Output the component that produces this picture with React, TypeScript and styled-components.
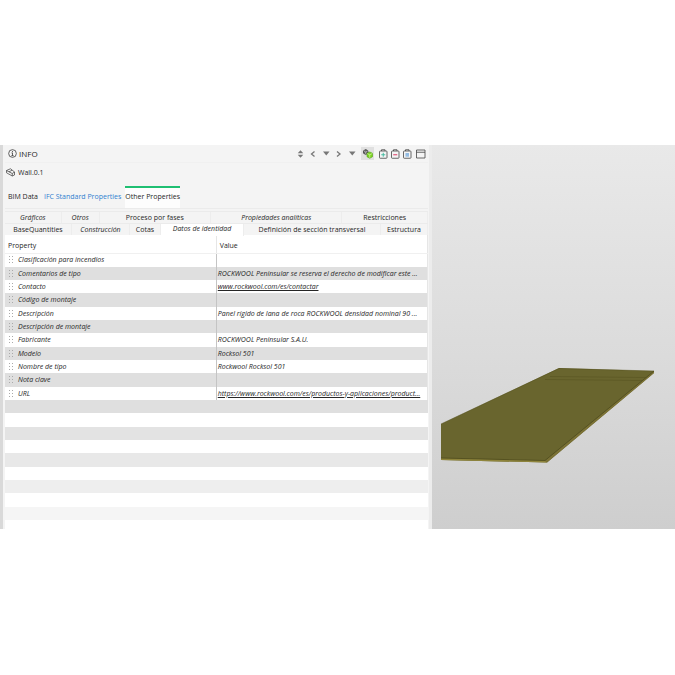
import React from 'react';
import styled, { createGlobalStyle, css } from 'styled-components';

const GlobalStyle = createGlobalStyle`
  *, *::before, *::after { box-sizing: border-box; }
  body {
    margin: 0;
    background: #ffffff;
    color: #262626;
    font-family: "Open Sans", "Noto Sans", sans-serif;
    font-size: 7px;
    line-height: 12px;
  }
  button { font: inherit; color: inherit; border: 0; padding: 0; margin: 0; background: none; cursor: pointer; }
`;

const Page = styled.main`
  display: grid;
  grid-template-columns: minmax(0, 432fr) minmax(0, 243fr);
  padding: 145px 0;
`;

const InfoPanel = styled.section`
  background: #f4f4f4;
  border-left: 3px solid #d9d9d9;
  border-right: 3px solid #ececec;
  padding: 0 1px 0 2px;
`;

const TitleBar = styled.header`
  display: flex;
  align-items: center;
  justify-content: space-between;
  height: 18px;
  padding: 0 2px 0 3px;
  border-bottom: 1px solid #f0f0f0;
`;

const Title = styled.h1`
  display: flex;
  align-items: center;
  gap: 2px;
  margin: 0;
  font-size: 8px;
  font-weight: 400;
`;

const Tools = styled.div`
  display: flex;
  align-items: center;
  gap: 4px;
`;

const ToolGroup = styled.div<{ $gap: number }>`
  display: flex;
  align-items: center;
  gap: ${(p) => p.$gap}px;
`;

const ToolButton = styled.button<{ $pressed?: boolean }>`
  display: flex;
  align-items: center;
  justify-content: center;
  width: ${(p) => (p.$pressed ? 13 : 10)}px;
  height: 13px;
  background: ${(p) => (p.$pressed ? '#e0e0e0' : 'transparent')};
`;

const ElementName = styled.h2`
  display: flex;
  align-items: center;
  gap: 3px;
  height: 18px;
  margin: 0;
  padding: 1px 0 0 1px;
  font-size: 7px;
  font-weight: 400;
`;

const MainTabs = styled.div`
  display: flex;
  align-items: flex-end;
  gap: 2px;
  height: 28px;
  padding-left: 1px;
  border-bottom: 1px solid #ebebeb;
`;

const MainTab = styled.button<{ $active?: boolean; $link?: boolean }>`
  height: 22px;
  padding: 0 2px;
  white-space: nowrap;
  color: ${(p) => (p.$link ? '#2f7fd0' : '#262626')};
  ${(p) =>
    p.$active &&
    css`
      padding: 0 0 3px;
      background: #fdfdfd;
      border-top: 2px solid #1fbf72;
    `}
`;

const SetTabs = styled.div`
  padding-top: 2px;
`;

const SetTabRow = styled.div<{ $columns: string }>`
  display: grid;
  grid-template-columns: ${(p) => p.$columns};
  height: 12px;
  border-top: 1px solid #ebebeb;
`;

const SetTab = styled.button<{ $active?: boolean; $italic?: boolean }>`
  min-width: 0;
  height: 11px;
  line-height: 11px;
  white-space: nowrap;
  font-style: ${(p) => (p.$italic ? 'italic' : 'normal')};
  border-right: 1px solid #ededed;
  ${(p) =>
    p.$active &&
    css`
      height: 12px;
      padding-bottom: 3px;
      line-height: 9px;
      background: #ffffff;
    `}
`;

const PropertyTable = styled.table`
  width: 100%;
  table-layout: fixed;
  border-collapse: collapse;
  background: #ffffff;
`;

const HeadCell = styled.th`
  height: 18px;
  padding: 4px 3px 0;
  text-align: left;
  font-weight: 400;
  border-right: 1px solid #e6e6e6;
  border-bottom: 1px solid #f0f0f0;
`;

const Row = styled.tr<{ $fill: string }>`
  height: 13px;
  background: ${(p) => p.$fill};
  &:nth-child(3n + 1) { height: 14px; }
`;

const Cell = styled.td`
  padding: 0 1px;
  line-height: 12px;
  font-style: italic;
  white-space: nowrap;
  overflow: hidden;
  border-right: 1px solid #c4c4c4;
  &:last-child { border-right-color: #e6e6e6; }
`;

const NameCell = styled.div`
  display: flex;
  align-items: center;
  gap: 5px;
  padding-left: 2px;
`;

const EmptyCell = styled.td`
  padding: 0;
`;

const ValueLink = styled.a`
  color: inherit;
  text-decoration: underline;
`;

const Viewport = styled.section`
  display: flex;
  align-items: flex-start;
  padding: 222px 20px 0 9px;
  background: linear-gradient(#e9e9e9, #dbdbdb 55%, #cecece);
`;

const Model = styled.svg`
  display: block;
  width: 100%;
  height: auto;
`;

const InfoIcon = () => (
  <svg width="9" height="9" viewBox="0 0 18 18" fill="none" stroke="#333" strokeWidth="1.5" aria-hidden="true">
    <circle cx="9" cy="9" r="7.7" />
    <path d="M9 7.500v6M6.800 13.200h4.400M7 7.800h2M9 4v2" />
  </svg>
);

const WallIcon = () => (
  <svg width="9" height="9" viewBox="0 0 18 18" fill="none" stroke="#444" strokeWidth="1.5" strokeLinejoin="round" aria-hidden="true">
    <path d="M1 5 9 1.500 17 8v6l-4.500 2V11z" />
    <path d="M1 5v4.500L12.500 16M12.500 11 17 8M6 7.800l6-3.500" />
  </svg>
);

const SortIcon = () => (
  <svg width="7" height="8" viewBox="0 0 14 16" fill="#777" aria-hidden="true">
    <path d="M7 0.500 12.500 6.500h-11zM7 15.500 12.500 9.500h-11z" />
  </svg>
);

const Chevron = ({ right }: { right?: boolean }) => (
  <svg width="6" height="8" viewBox="0 0 12 16" fill="none" stroke="#777" strokeWidth="2.6" aria-hidden="true">
    <path d={right ? 'M2 3 8 8 2 13' : 'M9 3 3 8 9 13'} />
  </svg>
);

const DownIcon = () => (
  <svg width="7" height="5" viewBox="0 0 14 10" fill="#777" aria-hidden="true">
    <path d="M0 1h13L6.500 9z" />
  </svg>
);

const CubesIcon = () => (
  <svg width="10" height="10" viewBox="0 0 20 20" strokeLinejoin="round" aria-hidden="true">
    <path d="M5.500 1 10 3.500v5L5.500 11 1 8.500v-5z" fill="#666" stroke="#333" strokeWidth="1.4" />
    <path d="M1.500 3.700 5.500 6l4-2.300M5.500 6v4.600" fill="none" stroke="#ddd" strokeWidth="1.1" />
    <path d="M13.500 6 19 8.500v7l-5.500 3L8 15.500v-7z" fill="#7ed321" stroke="#4f9f10" strokeWidth="1.2" />
    <path d="M8.400 9l5.100 2.600L18.600 9M13.500 11.600v6" fill="none" stroke="#e5ffc4" strokeWidth="1.2" />
  </svg>
);

const BagIcon = ({ kind }: { kind: 'add' | 'remove' | 'list' }) => (
  <svg width="9" height="10" viewBox="0 0 18 20" fill="none" stroke="#444" strokeWidth="1.6" aria-hidden="true">
    <rect x="1" y="4" width="15" height="14.500" rx="1.5" />
    <path d="M5 4V1.500h7V4" />
    {kind === 'add' && <path d="M8.500 7.500v8M4.500 11.500h8" stroke="#35b89a" strokeWidth="1.8" />}
    {kind === 'remove' && <path d="M4.500 11.500h8" stroke="#e0486e" strokeWidth="2.2" />}
    {kind === 'list' && <path d="M5 9.500h7M5 11.700h7M5 14h7" stroke="#5b9bd8" strokeWidth="1.7" />}
  </svg>
);

const WindowIcon = () => (
  <svg width="10" height="10" viewBox="0 0 20 20" fill="none" stroke="#444" strokeWidth="1.6" aria-hidden="true">
    <path d="M1 2h17v16H1zM1 6.500h17" />
  </svg>
);

const GripIcon = () => (
  <svg width="5" height="8" viewBox="0 0 5 8" fill="#aaaaaa" aria-hidden="true">
    {[0, 3, 6].map((y) => (
      <path key={y} d={`M1 ${y}h1v1H1zM4 ${y}h1v1H4z`} />
    ))}
  </svg>
);

interface SetTabData { label: string; italic?: boolean; active?: boolean }

const tabRows: { columns: string; tabs: SetTabData[] }[] = [
  {
    columns: '57fr 38fr 112fr 132fr 86fr',
    tabs: [
      { label: 'Gráficos', italic: true },
      { label: 'Otros', italic: true },
      { label: 'Proceso por fases' },
      { label: 'Propiedades analíticas', italic: true },
      { label: 'Restricciones' },
    ],
  },
  {
    columns: '67fr 58fr 31fr 83fr 137fr 47fr',
    tabs: [
      { label: 'BaseQuantities' },
      { label: 'Construcción', italic: true },
      { label: 'Cotas' },
      { label: 'Datos de identidad', italic: true, active: true },
      { label: 'Definición de sección transversal' },
      { label: 'Estructura' },
    ],
  },
];

const properties: { name: string; value?: string; href?: string }[] = [
  { name: 'Clasificación para incendios' },
  { name: 'Comentarios de tipo', value: 'ROCKWOOL Peninsular se reserva el derecho de modificar este ...' },
  { name: 'Contacto', value: 'www.rockwool.com/es/contactar', href: '#contactar' },
  { name: 'Código de montaje' },
  { name: 'Descripción', value: 'Panel rígido de lana de roca ROCKWOOL densidad nominal 90 ...' },
  { name: 'Descripción de montaje' },
  { name: 'Fabricante', value: 'ROCKWOOL Peninsular S.A.U.' },
  { name: 'Modelo', value: 'Rocksol 501' },
  { name: 'Nombre de tipo', value: 'Rockwool Rocksol 501' },
  { name: 'Nota clave' },
  { name: 'URL', value: 'https://www.rockwool.com/es/productos-y-aplicaciones/product...', href: '#productos' },
];

const emptyFills = ['#dfdfdf', '#ffffff', '#e3e3e3', '#ffffff', '#e8e8e8', '#ffffff', '#eeeeee', '#ffffff', '#f5f5f5'];

export default function App() {
  return (
    <>
      <GlobalStyle />
      <Page>
        <InfoPanel>
          <TitleBar>
            <Title><InfoIcon />INFO</Title>
            <Tools>
              <ToolGroup $gap={3}>
                <ToolButton aria-label="Sort"><SortIcon /></ToolButton>
                <ToolButton aria-label="Back"><Chevron /></ToolButton>
                <ToolButton aria-label="Back history"><DownIcon /></ToolButton>
                <ToolButton aria-label="Forward"><Chevron right /></ToolButton>
                <ToolButton aria-label="Forward history"><DownIcon /></ToolButton>
              </ToolGroup>
              <ToolButton $pressed aria-label="Components" aria-pressed="true"><CubesIcon /></ToolButton>
              <ToolGroup $gap={2}>
                <ToolButton aria-label="Add"><BagIcon kind="add" /></ToolButton>
                <ToolButton aria-label="Remove"><BagIcon kind="remove" /></ToolButton>
                <ToolButton aria-label="List"><BagIcon kind="list" /></ToolButton>
              </ToolGroup>
              <ToolButton aria-label="Window"><WindowIcon /></ToolButton>
            </Tools>
          </TitleBar>
          <ElementName><WallIcon />Wall.0.1</ElementName>
          <MainTabs role="tablist">
            <MainTab role="tab">BIM Data</MainTab>
            <MainTab role="tab" $link>IFC Standard Properties</MainTab>
            <MainTab role="tab" aria-selected="true" $active>Other Properties</MainTab>
          </MainTabs>
          <SetTabs role="tablist">
            {tabRows.map((row) => (
              <SetTabRow key={row.columns} $columns={row.columns}>
                {row.tabs.map((t) => (
                  <SetTab key={t.label} role="tab" aria-selected={!!t.active} $italic={t.italic} $active={t.active}>
                    {t.label}
                  </SetTab>
                ))}
              </SetTabRow>
            ))}
          </SetTabs>
          <PropertyTable>
            <thead>
              <tr>
                <HeadCell>Property</HeadCell>
                <HeadCell>Value</HeadCell>
              </tr>
            </thead>
            <tbody>
              {properties.map((p, i) => (
                <Row key={p.name} $fill={i % 2 ? '#dfdfdf' : '#ffffff'}>
                  <Cell><NameCell><GripIcon />{p.name}</NameCell></Cell>
                  <Cell>{p.href ? <ValueLink href={p.href}>{p.value}</ValueLink> : p.value}</Cell>
                </Row>
              ))}
              {emptyFills.map((fill, i) => (
                <Row key={i} $fill={fill}><EmptyCell colSpan={2} /></Row>
              ))}
              <tr><EmptyCell colSpan={2} height={9} /></tr>
            </tbody>
          </PropertyTable>
        </InfoPanel>
        <Viewport aria-label="3D view">
          <Model viewBox="0 0 214 96" role="img" aria-label="Wall panel">
            <path d="M0 57 118 1 213 4v2L106 95.500 0 93z" fill="#69652e" />
            <path d="M0 91 104 93.500 106 95.500 0 93z" fill="#8f853c" />
            <path d="M104 93.500 213 4v2L106 95.500z" fill="#7b7236" />
            <path d="M0 91 104 93.500 213 4" fill="none" stroke="#4c4a1d" strokeWidth="0.8" />
            <path d="M0 57 118 1.500 213 4M109 9.500l96 1M104 12.500l97 1" fill="none" stroke="#55511f" strokeWidth="0.5" />
          </Model>
        </Viewport>
      </Page>
    </>
  );
}
